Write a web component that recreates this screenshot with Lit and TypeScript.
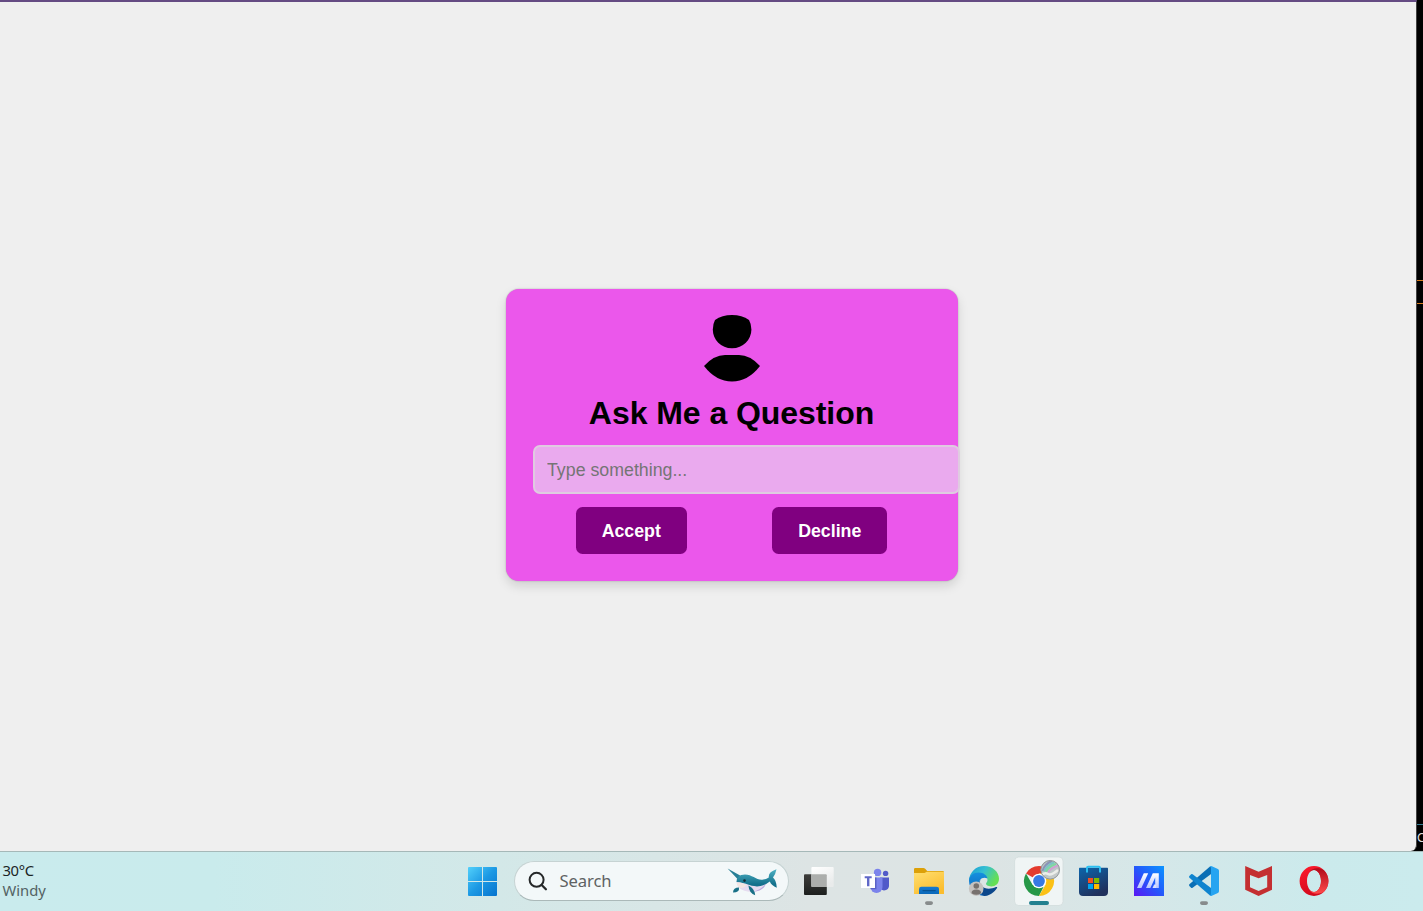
import { LitElement, html, css, svg } from "lit";
import { customElement } from "lit/decorators.js";

const icons = {
  taskView: svg`
    <defs>
      <linearGradient id="dk" x1="0" y1="0" x2="0" y2="1"><stop offset="0" stop-color="#3d3d3b"/><stop offset="1" stop-color="#1d1f1e"/></linearGradient>
      <linearGradient id="lt" x1="0" y1="0" x2="0.5" y2="1"><stop offset="0" stop-color="#ffffff"/><stop offset="1" stop-color="#e9ebeb"/></linearGradient>
    </defs>
    <rect x="13" y="23.3" width="22.8" height="20.7" rx="1" fill="url(#dk)"/>
    <rect x="20.4" y="16" width="22.3" height="20" rx="1" fill="url(#lt)"/>
    <path d="M20.4 23.3H34.8a1 1 0 0 1 1 1V36H21.4a1 1 0 0 1-1-1Z" fill="#acaeac"/>`,
  teams: svg`
    <circle cx="39.6" cy="22.4" r="2.7" fill="#5059c9"/>
    <path d="M34 26.5h9v8.8a5 5 0 0 1-9 2Z" fill="#5059c9"/>
    <circle cx="31.6" cy="21.4" r="3.7" fill="#7b83eb"/>
    <path d="M24.5 26.5h12v9.5a6 6 0 0 1-12 0Z" fill="#7b83eb"/>
    <path d="M24.5 26.5h6v11.7h-6Z" fill="#5b62c5"/>
    <rect x="15" y="23" width="14" height="14" fill="#fff"/>
    <path d="M18.7 25.2h7v2.1h-2.3v8h-2.4v-8h-2.3Z" fill="#6068c8"/>`,
  folder: svg`
    <defs><linearGradient id="fo" x1="0" y1="0" x2=".6" y2="1"><stop offset="0" stop-color="#ffdf70"/><stop offset="1" stop-color="#fbbd2f"/></linearGradient>
    <linearGradient id="fb" x1="0" y1="0" x2="0" y2="1"><stop offset="0" stop-color="#167bd0"/><stop offset="1" stop-color="#0a67b9"/></linearGradient></defs>
    <path d="M13 18.2a1.2 1.2 0 0 1 1.2-1.2h8.2q1 0 1.8.8l2 2.2h15.6q1.2 0 1.2 1.2V25H13Z" fill="#dca008"/>
    <path d="M13 22h10.5l2.3-1.2H43V43H13Z" fill="url(#fo)"/>
    <path d="M18 43v-4.8q0-2.4 2.4-2.4h15q2.6 0 2.6 2.4V43Z" fill="url(#fb)"/>
    <path d="M22 39.6h12.2" stroke="#075294" stroke-width="1.2" stroke-linecap="round"/>
    <rect x="24" y="50.2" width="8" height="3.7" rx="1.8" fill="#878b8c"/>`,
  edge: svg`
    <defs>
      <linearGradient id="e1" x1="0" y1="0" x2="1" y2=".45"><stop offset="0" stop-color="#159ad4"/><stop offset=".5" stop-color="#35bfd2"/><stop offset="1" stop-color="#65df55"/></linearGradient>
      <linearGradient id="e2" x1="0" y1="0" x2="0" y2="1"><stop offset="0" stop-color="#1590df"/><stop offset="1" stop-color="#0a62b8"/></linearGradient>
    </defs>
    <path d="M13 29.5A15 15 0 0 1 28 15c9 0 15 6.2 15 12.7 0 5-3.5 7.7-7.8 7.7-3.5 0-5.4-1.3-5.2-2.8.1-1 1.5-1.5 1.5-3.7 0-3.4-3.8-6.1-8.7-6.1-4.6 0-8 2.7-9.8 6.7Z" fill="url(#e1)"/>
    <path d="M13 29.8c0-5.2 4.6-8.4 9.6-8.4 5.2 0 8.5 3 8.9 6-5.7-2.1-9.1 1.8-8.4 6.6.7 5.2 4.8 9.8 9.4 10.1A15 15 0 0 1 13 29.8Z" fill="url(#e2)"/>
    <path d="M24.3 28.7c-2.2 7.8 6.9 11.2 15.7 7.4.9-.4 1.5.1 1 1-2.4 4.3-7.4 7.8-12.7 7.8-4.6-1.2-7.4-11-4-16.2Z" fill="#0c478b"/>
    <circle cx="20.2" cy="37.7" r="7.3" fill="#c5c2c0"/>
    <circle cx="20.3" cy="35" r="2.8" fill="#77716e"/><path d="M15.5 42.3q0-3.7 4.8-3.7t4.8 3.7q-4.8 3-9.6 0Z" fill="#77716e"/>`,
  chrome: svg`
    <defs><linearGradient id="av" x1="0" y1="0" x2=".8" y2="1"><stop offset="0" stop-color="#b5bcc0"/><stop offset=".5" stop-color="#b9c4c6"/><stop offset="1" stop-color="#c9cccb"/></linearGradient>
    <clipPath id="ac"><circle cx="39.2" cy="18.8" r="9.2"/></clipPath></defs>
    <rect x="3.6" y="6" width="48.4" height="48.5" rx="4" fill="#f0f5f5" stroke="#d2dcdc" stroke-width=".8"/>
    <path d="M28 30 15 22.5A15 15 0 0 1 41 22.5H28Z" fill="#e33b2e"/>
    <path d="M28 30h7.5L28 45a15 15 0 0 1-13-22.5l6.5 11.2Z" fill="#269847"/>
    <path d="M28 22.5h13A15 15 0 0 1 28 45l6.5-11.2Z" fill="#fbc116"/>
    <circle cx="28" cy="30" r="7.3" fill="#fff"/><circle cx="28" cy="30" r="5.9" fill="#3779e4"/>
    <circle cx="39.2" cy="18.8" r="9.5" fill="url(#av)"/>
    <g clip-path="url(#ac)" fill="none" stroke-width="2">
      <path d="M31.5 20q2-7 9.5-10" stroke="#8a94b8"/>
      <path d="M33.2 20.5q2.5-6.5 10-9" stroke="#7cc5c4"/>
      <path d="M35 21q2.5-5.6 10-8" stroke="#7fd9a0"/>
      <path d="M37 21.6q2.5-4.8 10-7" stroke="#d0a0d2"/>
      <path d="M30 24q4-3 7-1t10-4" stroke="#eceeea" stroke-width="2.6"/>
    </g>
    <circle cx="39.2" cy="18.8" r="9.3" fill="none" stroke="#8f9697" stroke-width="1"/>
    <rect x="18" y="50" width="20" height="4" rx="2" fill="#23808f"/>`,
  store: svg`
    <defs><linearGradient id="st" x1="0" y1="0" x2=".5" y2="1"><stop offset="0" stop-color="#0d65ab"/><stop offset="1" stop-color="#20315d"/></linearGradient></defs>
    <path d="M13 17.4q0-.6.6-.6h27.8q.6 0 .6.6V41q0 4-4 4H17q-4 0-4-4Z" fill="url(#st)"/>
    <path d="M21 21.5V17q0-1.2 1.2-1.2h10.6q1.2 0 1.2 1.2v4.5" fill="none" stroke="#2bc0f2" stroke-width="1.9"/>
    <rect x="22" y="27" width="5" height="5" fill="#f25022"/><rect x="28" y="27" width="5.2" height="5" fill="#7fba00"/>
    <rect x="22" y="33" width="5" height="5" fill="#00a4ef"/><rect x="28" y="33" width="5.2" height="5" fill="#ffb900"/>`,
  myAsus: svg`
    <defs><linearGradient id="as" x1="1" y1="0" x2="0" y2="1"><stop offset="0" stop-color="#0a94ff"/><stop offset=".5" stop-color="#2458fb"/><stop offset="1" stop-color="#5b16f4"/></linearGradient>
    <linearGradient id="aw" x1="0" y1="0" x2="0" y2="1"><stop offset="0" stop-color="#fff"/><stop offset="1" stop-color="#b9c6ff"/></linearGradient></defs>
    <rect x="13" y="15" width="30" height="30" fill="url(#as)"/>
    <path d="M16 37 22.8 22.3h4.4L20.4 37Z" fill="url(#aw)"/>
    <path d="M25 37 31.8 22.3h6V37h-3.6V26.5L29.4 37Z" fill="url(#aw)"/>
    <path d="m31.5 37 1.6-3.4h2V37Z" fill="#d7e0ff"/>`,
  code: svg`
    <path d="M34 15.4 13.4 33.3q-.8.8 0 1.7l1.7 1.8q.7.5 1.5 0L35.4 22.8V16Z" fill="#0a6fb5"/>
    <path d="M34 44.6 13.4 26.7q-.8-.8 0-1.7l1.7-1.8q.7-.5 1.5 0L35.4 37.2V44Z" fill="#0f84cf"/>
    <path d="M33.7 15.3q1.1-.6 2.2-.1l6 2.8q1.1.6 1.1 1.8v20.4q0 1.2-1.1 1.8l-6 2.8q-1.1.5-2.2-.1 1.3-.5 1.3-1.8V17.1q0-1.3-1.3-1.8Z" fill="#26a4f1"/>
    <rect x="24" y="50.2" width="8" height="3.7" rx="1.8" fill="#878b8c"/>`,
  shield: svg`
    <path d="M14.2 15 27.6 20.8 41 15v23.7L27.6 45l-13.4-6.3ZM19 24v12.2l8.6 3.7 8.6-3.7V24l-8.6 3.2Z" fill="#c42f31" fill-rule="evenodd"/>`,
  opera: svg`
    <defs><linearGradient id="op" x1="0" y1="0" x2=".4" y2="1"><stop offset="0" stop-color="#ff1b2d"/><stop offset="1" stop-color="#d20a1d"/></linearGradient>
    <linearGradient id="oq" x1="0" y1="0" x2="0" y2="1"><stop offset="0" stop-color="#b00a1a"/><stop offset="1" stop-color="#ff4b4b"/></linearGradient></defs>
    <path d="M28 15a14.4 15 0 1 0 0 30 14.4 15 0 0 0 0-30Zm0 4c4 0 7 5 7 11s-3 11-7 11-7-5-7-11 3-11 7-11Z" fill="url(#op)" fill-rule="evenodd"/>
    <path d="M23.5 20.8C26 17 32 16 37.7 18.9A14.4 15 0 0 1 37.7 41.1C32 44 26 43 23.5 39.2Q25.5 41 28 41C32 41 35 36 35 30S32 19 28 19Q25.5 19 23.5 20.8Z" fill="url(#oq)"/>`,
};

const apps = [
  ["Task View", icons.taskView],
  ["Teams", icons.teams],
  ["File Explorer", icons.folder],
  ["Edge", icons.edge],
  ["Chrome", icons.chrome],
  ["Store", icons.store],
  ["MyASUS", icons.myAsus],
  ["Code", icons.code],
  ["McAfee", icons.shield],
  ["Opera", icons.opera],
] as const;

@customElement("question-card")
class QuestionCard extends LitElement {
  static styles = css`
    :host { display: block; font-family: "Liberation Sans", Arial, sans-serif; }
    .card {
      box-sizing: border-box; width: 452px; height: 292px; padding: 26.5px 27px; border-radius: 13px;
      background: #eb57eb; box-shadow: 0 5px 11px rgba(0,0,0,.13), 0 0 1.5px rgba(0,0,0,.3);
      display: flex; flex-direction: column;
    }
    .avatar { display: block; width: 58px; height: 68px; align-self: center; flex: none; }
    h2 { margin: 12px 0 0; font-size: 32px; line-height: 37px; letter-spacing: -.06px; padding-right: 1px; text-align: center; white-space: nowrap; color: #000; }
    input {
      box-sizing: border-box; flex: none; width: 427px; height: 49px; margin: 13px 0 0; padding: 2px 12px 0;
      border: 2px solid #dfcbe0; border-radius: 7px; background: #eaaaee; font: 17.78px "Liberation Sans", Arial, sans-serif; color: #222;
    }
    input::placeholder { color: #757575; opacity: 1; }
    .actions { display: flex; justify-content: space-around; margin: 13px 1px 0 0; }
    button {
      height: 47px; padding: 2px 26px 0; border: 0; border-radius: 6.5px; background: #800080; color: #fff;
      font: bold 17.78px "Liberation Sans", Arial, sans-serif;
    }
  `;
  render() {
    return html`<div class="card">
      <svg class="avatar" viewBox="0 0 58 68">
        <path d="M12 5Q19 0 29 0T46 5Q48.4 9 48.4 14.5C48.4 25 40 33.3 29 33.3S9.8 25 9.8 14.5Q9.8 9 12 5Z"/>
        <path d="M1 51Q11 40 22 40H36Q47 40 57 51Q45 66.5 29 66.5T1 51Z"/>
      </svg>
      <h2>Ask Me a Question</h2>
      <input placeholder="Type something..." />
      <div class="actions"><button>Accept</button><button>Decline</button></div>
    </div>`;
  }
}

@customElement("task-bar")
class TaskBar extends LitElement {
  static styles = css`
    :host { display: block; font-family: "Noto Sans", "Open Sans", sans-serif; }
    .bar {
      display: flex; align-items: flex-start; box-sizing: border-box; height: 60px; border-top: 1px solid #a5b8b8;
      background: linear-gradient(90deg, #c9ebed 0, #c9ebec 15%, #d3e8e8 35%, #dde4e4 57%, #dce4e4 70%, #d6e7e8 80%, #cbeaec 93%, #cbebed 100%);
    }
    .weather { width: 465px; padding: 8px 0 0 2.5px; box-sizing: border-box; font-size: 14.8px; line-height: 20px; color: #1b2425; letter-spacing: -.35px; }
    .weather .sky { color: #536263; letter-spacing: 0; }
    .start { display: block; width: 35px; height: 59px; flex: none; }
    .search {
      display: flex; align-items: center; box-sizing: border-box; width: 275px; height: 40px; margin: 9px 2px 0 14px;
      border: 1px solid #c6d3d3; border-bottom-color: #abb9b9; border-radius: 20px; background: #f3f8f9;
    }
    .glass { width: 20px; height: 20px; margin-left: 13px; flex: none; }
    .label { margin-left: 11.5px; font-size: 16.6px; line-height: 24px; letter-spacing: -.1px; color: #5e6263; }
    .whale { width: 52px; height: 30px; margin: 2px 9px 0 auto; }
    .apps { display: flex; }
    .app { display: block; width: 55px; height: 59px; }
  `;
  render() {
    return html`<div class="bar">
      <div class="weather"><div>30°C</div><div class="sky">Windy</div></div>
      <svg class="start" viewBox="0 1 35 59">
        <defs><linearGradient id="w" gradientUnits="userSpaceOnUse" x1="3" y1="16" x2="32" y2="45"><stop offset="0" stop-color="#52d0fb"/><stop offset=".5" stop-color="#1c99e4"/><stop offset="1" stop-color="#0673ce"/></linearGradient></defs>
        <path fill="url(#w)" d="M3 17q0-1 1-1h13v14H3ZM18 16h13q1 0 1 1v13H18ZM3 31h14v14H4q-1 0-1-1ZM18 31h14v13q0 1-1 1H18Z"/>
      </svg>
      <div class="search">
        <svg class="glass" viewBox="0 0 20 20"><circle cx="8.6" cy="8.8" r="7" fill="none" stroke="#252829" stroke-width="2"/><path d="m13.7 14 4.2 4.2" stroke="#252829" stroke-width="2.3" stroke-linecap="round"/></svg>
        <span class="label">Search</span>
        <svg class="whale" viewBox="0 0 52 30">
          <defs><linearGradient id="n" x1="0" y1="0" x2="0" y2="1"><stop offset="0" stop-color="#4fb3c5"/><stop offset=".8" stop-color="#14718c"/></linearGradient></defs>
          <path d="M.6 1.6 14 9 11 12.4Z" fill="#267f96"/>
          <path d="M9.5 14C16 17 30 19 41 15 36 22 31 25.2 24 25 14 24.2 9.5 20 9.5 14Z" fill="#e6dcf0"/>
          <path d="M9.5 15Q9.5 8 18 7.6C25 7.6 29 13 35 12.8Q39.5 12.6 41.8 10.6 41 5 49.5 2.3 48.6 7 46 10.6 49.4 13.4 49.8 20.8 44.4 18.6 42.8 14.6 37 19.4 30 19.4C22 19 19 15.6 9.5 15Z" fill="url(#n)"/>
          <path d="M9.6 15.2q6 .2 10 2.8-3 4.6-7.4 2.2-2.4-2-2.6-5Z" fill="#f4e6e2"/>
          <path d="M21.4 18.6q6.4 3 6.8 9.6-6-1.6-6.8-9.6ZM12 20.6q.8 5-6 5 .2-5 6-5Z" fill="#187087"/>
          <circle cx="17.5" cy="13.6" r="1.3" fill="#122c35"/>
          <path d="M26 24.6q8-1.6 13-8-2.6 8-13 8Z" fill="#bbaadd"/>
        </svg>
      </div>
      <div class="apps">${apps.map(([name, art]) => html`<svg class="app" viewBox="0 1 55 59" aria-label=${name}>${art}</svg>`)}</div>
    </div>`;
  }
}

@customElement("app-root")
class AppRoot extends LitElement {
  static styles = css`
    :host { display: block; width: 1423px; height: 911px; overflow: hidden; }
    .screen { display: flex; flex-direction: column; height: 100%; }
    .desk { display: flex; height: 851px; background: #000; }
    .window {
      box-sizing: border-box; width: 1417px; height: 851px; padding: 286.5px 0 0 506px;
      border-top: 2px solid #654b83; background: #efefef; border-bottom-right-radius: 6px; border-right: 1px solid #444;
    }
    .editor { width: 6px; display: grid; grid-template-rows: 281px 23px 521px 26px; font: 13px/25px "Liberation Sans", sans-serif; color: #ddd; }
    .editor .orange { border-bottom: 1px solid #d67a1c; }
    .editor .blue { border-bottom: 1px solid #357d92; }
    .glyph { width: 6px; overflow: visible; }
  `;
  render() {
    return html`<div class="screen">
      <div class="desk">
        <div class="window"><question-card></question-card></div>
        <div class="editor"><div class="orange"></div><div class="orange"></div><div class="blue"></div><div class="glyph">C</div></div>
      </div>
      <task-bar></task-bar>
    </div>`;
  }
}
